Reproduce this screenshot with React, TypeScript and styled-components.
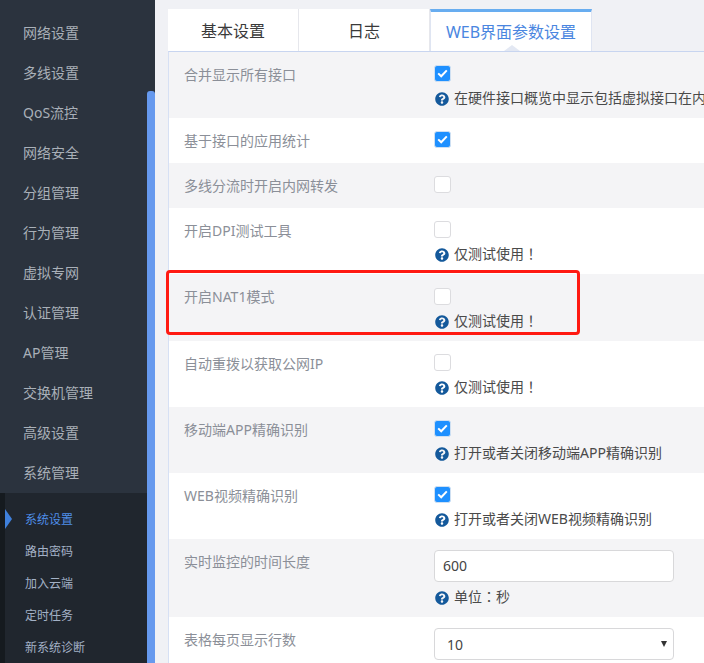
import React from "react";
import styled, { createGlobalStyle } from "styled-components";
import { FaQuestionCircle } from "react-icons/fa";

const FONT = `"Noto Sans", "Noto Sans CJK SC", sans-serif`;

const Global = createGlobalStyle`
  html, body { margin: 0; padding: 0; height: 100%; overflow: hidden; }
  body { font-family: ${FONT}; background: #f0f1f5; }
  * { box-sizing: border-box; }
`;

const Page = styled.div`
  display: flex;
  width: 704px;
  height: 663px;
  overflow: hidden;
  position: relative;
`;

const Sidebar = styled.aside`
  display: flex;
  flex: 0 0 155px;
  height: 663px;
  background: #2b333e;
`;

const MenuColumn = styled.nav`
  flex: 0 0 147px;
  display: flex;
  flex-direction: column;
  padding-top: 13px;
  min-width: 0;
`;

const MenuItem = styled.div`
  flex: 0 0 40px;
  line-height: 39px;
  padding-left: 23px;
  font-size: 14px;
  color: #a9b0b8;
  white-space: nowrap;
`;

const SubMenu = styled.div`
  flex: 1;
  display: flex;
  flex-direction: column;
  padding-top: 11px;
  background: #20262e;
  border-left: 5px solid #151a1f;
`;

const SubItem = styled.div<{ $active?: boolean }>`
  position: relative;
  flex: 0 0 32px;
  height: 32px;
  line-height: 32px;
  padding-left: 20px;
  font-size: 12px;
  color: ${(p) => (p.$active ? "#4f8ee8" : "#a3b1c6")};
  white-space: nowrap;
  ${(p) =>
    p.$active
      ? `&::before {
          content: "";
          position: absolute;
          left: 0;
          top: 5px;
          border-left: 7px solid #3f80dc;
          border-top: 10px solid transparent;
          border-bottom: 10px solid transparent;
        }`
      : ""}
`;

const ScrollTrack = styled.div`
  flex: 0 0 8px;
  padding-top: 91px;
`;

const ScrollThumb = styled.div`
  height: 100%;
  background: #6699ee;
  border-radius: 3px 3px 0 0;
`;

const Main = styled.main`
  flex: 1;
  min-width: 0;
  padding: 9px 0 0 13px;
  overflow: hidden;
`;

const Tabs = styled.div`
  display: flex;
  height: 42px;
  width: 600px;
`;

const Tab = styled.div<{ $active?: boolean; $width: number }>`
  position: relative;
  flex: 0 0 ${(p) => p.$width}px;
  text-align: center;
  font-size: 16px;
  white-space: nowrap;
  background: #fff;
  color: ${(p) => (p.$active ? "#4a86e0" : "#3a3a3a")};
  line-height: ${(p) => (p.$active ? "40px" : "44px")};
  border-right: 1px solid ${(p) => (p.$active ? "#dfe5f2" : "#e6e7ec")};
  ${(p) =>
    p.$active
      ? `border-top: 3px solid #68adf0;
         border-left: 1px solid #dfe5f2;
         &::after {
           content: "";
           position: absolute;
           left: 73px;
           bottom: 0;
           border-left: 8px solid transparent;
           border-right: 8px solid transparent;
           border-bottom: 6px solid #e3e8f3;
         }`
      : ""}
`;

const Panel = styled.section`
  width: 640px;
  border-top: 1px solid #c8d5f0;
  border-left: 1px solid #d6e0f4;
`;

const Row = styled.div<{ $alt?: boolean; $height: number }>`
  display: flex;
  height: ${(p) => p.$height}px;
  background: ${(p) => (p.$alt ? "#f4f4f6" : "#fff")};
  overflow: hidden;
`;

const Label = styled.div`
  flex: 0 0 265px;
  padding: 13px 0 0 15px;
  line-height: 20px;
  font-size: 14px;
  color: #8b8f98;
  white-space: nowrap;
`;

const Control = styled.div<{ $top: number }>`
  flex: 1;
  min-width: 0;
  padding-top: ${(p) => p.$top}px;
  display: flex;
  flex-direction: column;
  align-items: flex-start;
`;

const Check = styled.span<{ $on?: boolean }>`
  display: flex;
  align-items: center;
  justify-content: center;
  width: 17px;
  height: 17px;
  border-radius: 3px;
  background: ${(p) => (p.$on ? "#1e90ff" : "#fff")};
  border: 1px solid ${(p) => (p.$on ? "#cfe0f2" : "#dcdcdf")};
`;

const Hint = styled.div<{ $gap: number }>`
  display: flex;
  align-items: center;
  gap: 5px;
  margin-top: ${(p) => p.$gap}px;
  height: 20px;
  font-size: 14px;
  line-height: 19px;
  color: #4a4a4a;
  white-space: nowrap;
  svg { color: #14599b; flex: 0 0 14px; margin-left: 1px; position: relative; top: 2px; }
`;

const Punct = styled.span`
  font-family: "Noto Sans CJK TC", sans-serif;
`;

const Input = styled.div`
  width: 240px;
  height: 32px;
  border: 1px solid #d8d8da;
  border-radius: 4px;
  background: #fff;
  line-height: 29px;
  padding-left: 8px;
  font-size: 14px;
  color: #444;
`;

const Select = styled(Input)`
  display: flex;
  justify-content: space-between;
  align-items: center;
  padding: 0 6px 0 12px;
`;

const Caret = styled.span`
  width: 0;
  height: 0;
  border-left: 3.5px solid transparent;
  border-right: 3.5px solid transparent;
  border-top: 6px solid #333;
`;

const Annotation = styled.div`
  position: absolute;
  left: 166px;
  top: 270px;
  width: 414px;
  height: 65px;
  border: 3px solid #ff1a12;
  border-radius: 4px;
  pointer-events: none;
`;

const Tick = () => (
  <svg width="11" height="9" viewBox="0 0 11 9" aria-hidden="true">
    <path d="M1.2 4.4 4.2 7.3 9.8 1.4" fill="none" stroke="#fff" strokeWidth="2" />
  </svg>
);

const Help = ({ children, gap = 5 }: { children: React.ReactNode; gap?: number }) => (
  <Hint $gap={gap}>
    <FaQuestionCircle size={14} />
    <span>{children}</span>
  </Hint>
);

const testOnly = (
  <>
    仅测试使用<Punct>！</Punct>
  </>
);

const menu = ["网络设置", "多线设置", "QoS流控", "网络安全", "分组管理", "行为管理", "虚拟专网", "认证管理", "AP管理", "交换机管理", "高级设置", "系统管理"];
const sub = ["系统设置", "路由密码", "加入云端", "定时任务", "新系统诊断"];

const rows: { label: string; on: boolean; hint?: React.ReactNode; h: number; top?: number }[] = [
  { label: "合并显示所有接口", on: true, hint: "在硬件接口概览中显示包括虚拟接口在内", h: 66 },
  { label: "基于接口的应用统计", on: true, h: 45 },
  { label: "多线分流时开启内网转发", on: false, h: 45 },
  { label: "开启DPI测试工具", on: false, hint: testOnly, h: 66 },
  { label: "开启NAT1模式", on: false, hint: testOnly, h: 67, top: 14 },
  { label: "自动重拨以获取公网IP", on: false, hint: testOnly, h: 66 },
  { label: "移动端APP精确识别", on: true, hint: "打开或者关闭移动端APP精确识别", h: 66 },
  { label: "WEB视频精确识别", on: true, hint: "打开或者关闭WEB视频精确识别", h: 66 },
];

export default function App() {
  return (
    <Page>
      <Global />
      <Sidebar>
        <MenuColumn>
          {menu.map((m) => (
            <MenuItem key={m}>{m}</MenuItem>
          ))}
          <SubMenu>
            {sub.map((s, i) => (
              <SubItem key={s} $active={i === 0}>{s}</SubItem>
            ))}
          </SubMenu>
        </MenuColumn>
        <ScrollTrack>
          <ScrollThumb />
        </ScrollTrack>
      </Sidebar>
      <Main>
        <Tabs>
          <Tab $width={131}>基本设置</Tab>
          <Tab $width={131}>日志</Tab>
          <Tab $width={162} $active>WEB界面参数设置</Tab>
        </Tabs>
        <Panel>
          {rows.map((r, i) => (
            <Row key={r.label} $alt={i % 2 === 0} $height={r.h}>
              <Label>{r.label}</Label>
              <Control $top={r.top ?? 13}>
                <Check $on={r.on}>{r.on && <Tick />}</Check>
                {r.hint && <Help>{r.hint}</Help>}
              </Control>
            </Row>
          ))}
          <Row $alt $height={78}>
            <Label>实时监控的时间长度</Label>
            <Control $top={11}>
              <Input>600</Input>
              <Help gap={4}>
                单位<Punct>：</Punct>秒
              </Help>
            </Control>
          </Row>
          <Row $height={60}>
            <Label>表格每页显示行数</Label>
            <Control $top={11}>
              <Select>
                10
                <Caret />
              </Select>
            </Control>
          </Row>
        </Panel>
      </Main>
      <Annotation />
    </Page>
  );
}
